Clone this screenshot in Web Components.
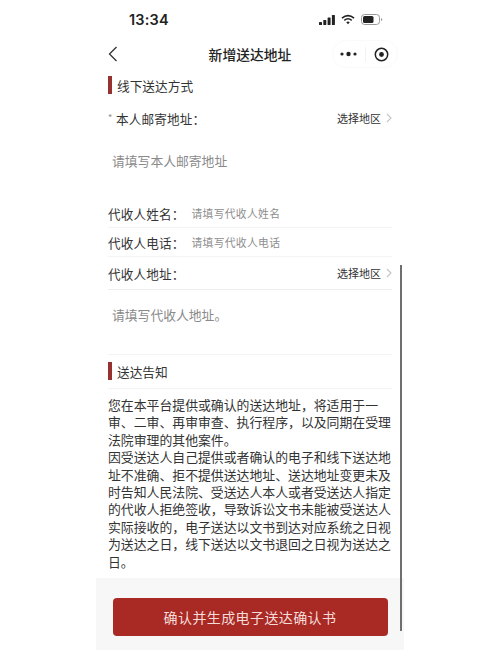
<!DOCTYPE html>
<html lang="zh">
<head>
<meta charset="utf-8">
<style>
html,body{margin:0;padding:0;background:#fff;}
body{font-family:"Noto Sans CJK SC","Liberation Sans",sans-serif;color:#333;width:500px;height:650px;overflow:hidden;}
</style>
</head>
<body>
<address-page></address-page>
<script>
"use strict";

class StatusBar extends HTMLElement {
    constructor() {
        super();
        this.attachShadow({ mode: "open" }).innerHTML = `
<style>
:host{display:flex;align-items:center;justify-content:space-between;height:39px;padding:0 21px 0 33px;}
.time{font:600 14.5px "Inter","Liberation Sans",sans-serif;color:#222;letter-spacing:.2px;}
.icons{display:flex;align-items:center;gap:6px;}
svg{display:block;}
</style>
<span class="time">13:34</span>
<div class="icons">
<svg width="16" height="10" viewBox="0 0 16 10" fill="#222"><rect x="0" y="7" width="3" height="3" rx=".6"/><rect x="4.3" y="5" width="3" height="5" rx=".6"/><rect x="8.6" y="2.5" width="3" height="7.5" rx=".6"/><rect x="12.9" y="0" width="3" height="10" rx=".6"/></svg>
<svg width="14" height="11" viewBox="0 0 15 11" fill="none" stroke="#222" stroke-width="1.7"><path d="M1 4 Q7.5 -1.2 14 4"/><path d="M3.5 6.4 Q7.5 3 11.5 6.4"/><path d="M7.5 10.6 L5.6 8.5 Q7.5 7 9.4 8.5 Z" fill="#222" stroke="none"/></svg>
<svg width="22" height="11" viewBox="0 0 22 11" fill="none"><rect x=".5" y=".5" width="18" height="10" rx="3" stroke="#999"/><rect x="2" y="2" width="10.5" height="7" rx="1.6" fill="#222"/><path d="M20 4v3q1.3-.5 1.3-1.5T20 4z" fill="#999"/></svg>
</div>`;
    }
}

class NavBar extends HTMLElement {
    constructor() {
        super();
        this.attachShadow({ mode: "open" }).innerHTML = `
<style>
:host{display:flex;align-items:center;height:30px;position:relative;padding:0 6px 0 12px;}
.back{display:block;}
h1{position:absolute;left:0;right:0;text-align:center;margin:0;font-size:13.8px;font-weight:500;color:#222;pointer-events:none;}
.capsule{margin-left:auto;display:flex;align-items:center;height:28px;width:66px;border:1px solid #fafafa;border-radius:15px;box-sizing:border-box;}
.cell{flex:1;display:flex;justify-content:center;align-items:center;}
.sep{width:1px;height:15px;background:#f2f2f2;}
</style>
<svg class="back" width="10" height="16" viewBox="0 0 10 16" fill="none" stroke="#333" stroke-width="1.3"><path d="M8.5 1 L1.5 8 L8.5 15"/></svg>
<h1><slot></slot></h1>
<div class="capsule">
<span class="cell"><svg width="17" height="6" viewBox="0 0 17 6" fill="#222"><circle cx="2" cy="3" r="1.6"/><circle cx="8.5" cy="3" r="2.2"/><circle cx="15" cy="3" r="1.6"/></svg></span>
<span class="sep"></span>
<span class="cell"><svg width="15" height="15" viewBox="0 0 15 15"><circle cx="7.5" cy="7.5" r="6.2" fill="none" stroke="#222" stroke-width="1.5"/><circle cx="7.5" cy="7.5" r="2.4" fill="#222"/></svg></span>
</div>`;
    }
}

class SectionTitle extends HTMLElement {
    constructor() {
        super();
        this.attachShadow({ mode: "open" }).innerHTML = `
<style>
:host{display:flex;align-items:center;gap:5px;height:18px;font-size:12.7px;color:#333;}
i{display:block;width:4px;height:18px;background:#96312f;}
</style>
<i></i><slot></slot>`;
    }
}

class FormRow extends HTMLElement {
    constructor() {
        super();
        this.attachShadow({ mode: "open" });
    }
    connectedCallback() {
        const label = this.getAttribute("label");
        const hint = this.getAttribute("hint");
        const region = this.hasAttribute("region");
        const star = this.hasAttribute("required") ? '<span class="star">*</span>' : "";
        this.shadowRoot.innerHTML = `
<style>
:host{display:flex;align-items:center;font-size:12.6px;color:#333;position:relative;}
.star{position:absolute;left:0;top:50%;margin-top:-7px;font-size:9px;color:#888;}
.label{letter-spacing:.15px;white-space:nowrap;}
.hint{margin-left:7px;font-size:10.8px;color:#8e8e8e;letter-spacing:.3px;}
.region{margin-left:auto;display:flex;align-items:center;gap:5px;font-size:11px;color:#333;}
svg{display:block;}
</style>
${star}<span class="label" style="${star ? "margin-left:8px" : ""}">${label}</span>
${hint ? `<span class="hint">${hint}</span>` : ""}
${region ? `<span class="region">选择地区<svg width="6" height="10" viewBox="0 0 6 10" fill="none" stroke="#c4c4c4" stroke-width="1.1"><path d="M1 1l4 4-4 4"/></svg></span>` : ""}`;
    }
}

class TextArea extends HTMLElement {
    constructor() {
        super();
        this.attachShadow({ mode: "open" }).innerHTML = `
<style>
:host{display:block;font-size:12.8px;color:#8a8a8a;padding-left:4px;}
</style>
<slot></slot>`;
    }
}

class SubmitBar extends HTMLElement {
    constructor() {
        super();
        this.attachShadow({ mode: "open" }).innerHTML = `
<style>
:host{display:flex;justify-content:center;box-sizing:border-box;height:72px;padding-top:20px;background:#f7f7f7;}
button{width:275px;height:38px;border:0;border-radius:4px;background:#a92a25;color:#f3dcd8;font:14px "Noto Sans CJK SC",sans-serif;letter-spacing:.4px;padding:0;}
</style>
<button><slot></slot></button>`;
    }
}

class AddressPage extends HTMLElement {
    constructor() {
        super();
        this.attachShadow({ mode: "open" }).innerHTML = `
<style>
:host{display:block;width:308px;height:650px;margin-left:96px;position:relative;overflow:hidden;background:#fff;}
.body{padding:0 12px;}
section-title.first{margin-top:7px;}
form-row{height:26px;}
.mail{margin-top:11px;}
.mail-input{margin-top:20px;height:48px;}
.row-line{border-bottom:1px solid #f4f4f4;height:28px;}
.row-line.addr{height:32px;border-bottom-color:#eee;}
.addr-input{margin-top:15px;height:49px;}
.rule{border-bottom:1px solid #f3f3f3;}
.notice-head{padding-top:7px;height:26px;}
.notice{margin:7px 0 0;width:286px;font-size:12.87px;line-height:17.4px;color:#333;height:183px;}
.scroll{position:absolute;left:304px;top:265px;width:2px;height:366px;background:#6f6f6f;}
submit-bar{margin-top:-1px;}
</style>
<status-bar></status-bar>
<nav-bar>新增送达地址</nav-bar>
<div class="body">
<section-title class="first">线下送达方式</section-title>
<form-row class="mail" label="本人邮寄地址：" region required></form-row>
<text-area class="mail-input">请填写本人邮寄地址</text-area>
<form-row class="row-line" label="代收人姓名：" hint="请填写代收人姓名"></form-row>
<form-row class="row-line" label="代收人电话：" hint="请填写代收人电话"></form-row>
<form-row class="row-line addr" label="代收人地址：" region></form-row>
<text-area class="addr-input">请填写代收人地址。</text-area>
<div class="rule"></div>
<div class="notice-head"><section-title>送达告知</section-title></div>
<div class="rule"></div>
<p class="notice">您在本平台提供或确认的送达地址，将适用于一审、二审、再审审查、执行程序，以及同期在受理法院审理的其他案件。<br>因受送达人自己提供或者确认的电子和线下送达地址不准确、拒不提供送达地址、送达地址变更未及时告知人民法院、受送达人本人或者受送达人指定的代收人拒绝签收，导致诉讼文书未能被受送达人实际接收的，电子送达以文书到达对应系统之日视为送达之日，线下送达以文书退回之日视为送达之日。</p>
</div>
<submit-bar>确认并生成电子送达确认书</submit-bar>
<div class="scroll"></div>`;
    }
}

customElements.define("status-bar", StatusBar);
customElements.define("nav-bar", NavBar);
customElements.define("section-title", SectionTitle);
customElements.define("form-row", FormRow);
customElements.define("text-area", TextArea);
customElements.define("submit-bar", SubmitBar);
customElements.define("address-page", AddressPage);
</script>
</body>
</html>
